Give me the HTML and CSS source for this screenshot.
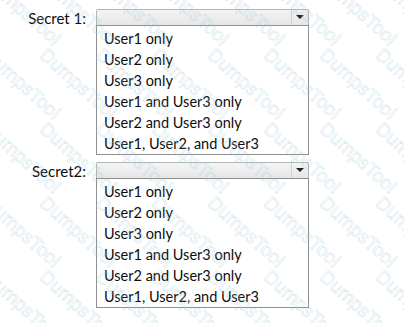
FILE: index.html
```html
<!DOCTYPE html>
<html>
<head>
<meta charset="utf-8">
<link rel="stylesheet" href="styles.css">
</head>
<body>
<div class="form">
  <div class="row">
    <div class="label">Secret 1:</div>
    <div class="select">
      <div class="combo"><span class="btn"><span class="arrow"></span></span></div>
      <ul class="list">
        <li>User1 only</li>
        <li>User2 only</li>
        <li>User3 only</li>
        <li>User1 and User3 only</li>
        <li>User2 and User3 only</li>
        <li>User1, User2, and User3</li>
      </ul>
    </div>
  </div>
  <div class="row">
    <div class="label">Secret2:</div>
    <div class="select">
      <div class="combo"><span class="btn"><span class="arrow"></span></span></div>
      <ul class="list">
        <li>User1 only</li>
        <li>User2 only</li>
        <li>User3 only</li>
        <li>User1 and User3 only</li>
        <li>User2 and User3 only</li>
        <li>User1, User2, and User3</li>
      </ul>
    </div>
  </div>
</div>
<div class="watermark" aria-hidden="true">
  <span>DumpsTool</span><span>DumpsTool</span><span>DumpsTool</span><span>DumpsTool</span><span>DumpsTool</span><span>DumpsTool</span><span>DumpsTool</span><span>DumpsTool</span>
  <span>DumpsTool</span><span>DumpsTool</span><span>DumpsTool</span><span>DumpsTool</span><span>DumpsTool</span><span>DumpsTool</span><span>DumpsTool</span><span>DumpsTool</span>
  <span>DumpsTool</span><span>DumpsTool</span><span>DumpsTool</span><span>DumpsTool</span><span>DumpsTool</span><span>DumpsTool</span><span>DumpsTool</span><span>DumpsTool</span>
  <span>DumpsTool</span><span>DumpsTool</span><span>DumpsTool</span><span>DumpsTool</span><span>DumpsTool</span><span>DumpsTool</span><span>DumpsTool</span><span>DumpsTool</span>
  <span>DumpsTool</span><span>DumpsTool</span><span>DumpsTool</span><span>DumpsTool</span><span>DumpsTool</span><span>DumpsTool</span><span>DumpsTool</span><span>DumpsTool</span>
  <span>DumpsTool</span><span>DumpsTool</span><span>DumpsTool</span><span>DumpsTool</span><span>DumpsTool</span><span>DumpsTool</span><span>DumpsTool</span><span>DumpsTool</span>
</div>
</body>
</html>
```
FILE: styles.css
```css
html, body {
  margin: 0;
  background: #ffffff;
}
body {
  font-family: "Lato", "Open Sans", sans-serif;
  font-size: 14.5px;
  color: #0d0d0d;
  position: relative;
  height: 323px;
  overflow: hidden;
}
.form {
  padding-top: 9px;
  display: flex;
  flex-direction: column;
  gap: 7px;
}
.row {
  display: flex;
  align-items: flex-start;
}
.label {
  width: 96px;
  text-align: right;
  padding-right: 10px;
  box-sizing: border-box;
  line-height: 18px;
  font-size: 15px;
}
.select {
  width: 213px;
}
.combo {
  height: 16px;
  box-sizing: border-box;
  border: 1px solid #b5b5b5;
  border-bottom: none;
  border-radius: 2px 2px 0 0;
  background: linear-gradient(#f4f4f4, #e6e6e6);
  display: flex;
  justify-content: flex-end;
}
.btn {
  width: 16px;
  border-left: 1px solid #d2d2d2;
  display: flex;
  align-items: center;
  justify-content: center;
}
.arrow {
  width: 0;
  height: 0;
  border-left: 4px solid transparent;
  border-right: 4px solid transparent;
  border-top: 4px solid #222;
  margin-top: -1px;
}
.list {
  list-style: none;
  margin: 0;
  padding: 2px 0 2px 7px;
  border: 1px solid #8f8f8f;
  height: 130px;
  box-sizing: border-box;
}
.list li {
  line-height: 21px;
  height: 21px;
  white-space: nowrap;
}
.watermark {
  position: absolute;
  left: -6px;
  top: -30px;
  width: 480px;
  display: grid;
  grid-template-columns: repeat(8, 56px);
  grid-auto-rows: 74px;
  pointer-events: none;
}
.watermark span {
  display: block;
  font-family: "Liberation Sans", sans-serif;
  font-size: 19px;
  color: transparent;
  -webkit-text-stroke: 0.6px rgba(150, 200, 215, 0.45);
  transform: rotate(42deg);
  transform-origin: 0 0;
  white-space: nowrap;
}
```
